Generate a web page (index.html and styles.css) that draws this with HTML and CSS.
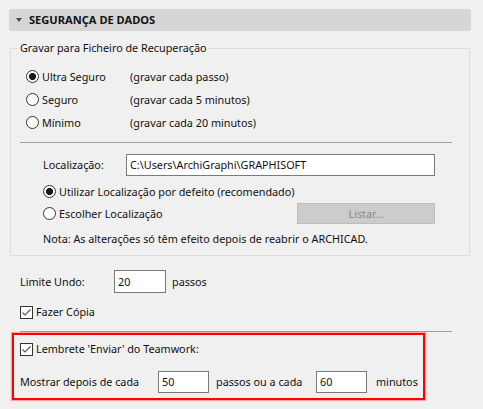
FILE: index.html
```html
<!DOCTYPE html>
<html lang="pt">
<head>
<meta charset="utf-8">
<title>Segurança de Dados</title>
<link rel="stylesheet" href="styles.css">
</head>
<body>
<div class="panel">
  <div class="header"><span class="tri"></span><span class="title">SEGURANÇA DE DADOS</span></div>

  <fieldset class="group">
    <legend>Gravar para Ficheiro de Recuperação</legend>
    <div class="group-body">
      <div class="mode"><span class="radio on"></span><span class="mode-name">Ultra Seguro</span><span>(gravar cada passo)</span></div>
      <div class="mode"><span class="radio"></span><span class="mode-name">Seguro</span><span>(gravar cada 5 minutos)</span></div>
      <div class="mode"><span class="radio"></span><span class="mode-name">Mínimo</span><span>(gravar cada 20 minutos)</span></div>
      <hr class="sep">
      <div class="loc">
        <div class="loc-row"><span class="loc-label">Localização:</span><div class="field path">C:\Users\ArchiGraphi\GRAPHISOFT</div></div>
        <div class="opt first"><span class="radio on"></span>Utilizar Localização por defeito (recomendado)</div>
        <div class="opt second"><span class="radio"></span>Escolher Localização<button class="btn">Listar...</button></div>
        <p class="note">Nota: As alterações só têm efeito depois de reabrir o ARCHICAD.</p>
      </div>
    </div>
  </fieldset>

  <div class="undo"><span class="undo-label">Limite Undo:</span><div class="field num">20</div><span class="unit">passos</span></div>

  <div class="copy"><svg class="check" width="13" height="13" viewBox="0 0 13 13"><rect x="0.5" y="0.5" width="12" height="12" fill="#fff" stroke="#333"/><path d="M2.5 6.5 L5 9 L10.5 3.5" fill="none" stroke="#5a5a5a" stroke-width="1.2"/></svg>Fazer Cópia</div>

  <hr class="sep2">

  <div class="teamwork">
    <div class="tw-row"><svg class="check" width="13" height="13" viewBox="0 0 13 13"><rect x="0.5" y="0.5" width="12" height="12" fill="#fff" stroke="#333"/><path d="M2.5 6.5 L5 9 L10.5 3.5" fill="none" stroke="#5a5a5a" stroke-width="1.2"/></svg>Lembrete 'Enviar' do Teamwork:</div>
    <div class="show-row"><span class="show-label">Mostrar depois de cada</span><div class="field num2">50</div><span class="mid">passos ou a cada</span><div class="field num2">60</div><span class="min">minutos</span></div>
  </div>
</div>
</body>
</html>
```
FILE: styles.css
```css
* { box-sizing: border-box; }
html, body { margin: 0; }
body {
  background: #f0f0f0;
  font-family: "Noto Sans", "Open Sans", sans-serif;
  font-size: 10.8px;
  line-height: 16px;
  color: #111;
  width: 483px;
  height: 409px;
  overflow: hidden;
}
.panel { padding: 9px 12px 0 9px; }
.header {
  height: 22px;
  background: #d6d6d6;
  border-radius: 3px;
  display: flex;
  align-items: center;
  padding-left: 7px;
}
.tri {
  width: 0; height: 0;
  border-left: 3px solid transparent;
  border-right: 3px solid transparent;
  border-top: 4px solid #4a4a4a;
  margin-right: 7px;
}
.title { font-weight: 700; font-size: 11.1px; }

.group {
  margin: 9px 1px 0;
  padding: 0;
  border: 1px solid #dcdcdc;
  min-width: 0;
}
.group legend { margin-left: 7px; padding: 0 2px; line-height: 16px; }
.group-body { padding: 9px 34px 8px 15px; }

.mode { display: flex; align-items: center; height: 23px; }
.mode-name { width: 88px; flex: none; }
.radio {
  flex: none;
  width: 13px; height: 13px;
  border: 1px solid #333;
  border-radius: 50%;
  background: #fff;
  margin-right: 3px;
}
.radio.on { background: radial-gradient(circle, #1a1a1a 3.2px, #fff 3.9px); }

.sep {
  border: 0;
  border-top: 1px solid #a0a0a0;
  height: 0;
  margin: 8px -17px 0 -6px;
}
.loc { margin-left: 17px; }
.loc-row { display: flex; align-items: center; margin-top: 11px; }
.loc-label { width: 83px; flex: none; }
.field {
  flex: none;
  height: 22px;
  border: 1px solid #7a7a7a;
  background: #fff;
  padding-left: 3px;
  display: flex;
  align-items: center;
}
.path { flex: 1; }
.opt { display: flex; align-items: center; height: 21px; }
.opt.first { margin-top: 5px; }
.opt.second { margin-top: 1px; }
.btn {
  flex: none;
  margin-left: auto;
  width: 138px; height: 21px;
  background: #cccccc;
  border: 1px solid #bdbdbd;
  color: #8a8a8a;
  font: inherit;
  padding: 0;
}
.note { margin: 7px 0 0; }

.undo { display: flex; align-items: center; margin-top: 14px; padding-left: 11px; }
.undo-label { width: 94px; flex: none; }
.num { width: 52px; height: 23px; }
.unit { margin-left: 6px; }

.copy { display: flex; align-items: center; height: 20px; margin-top: 9px; padding-left: 11px; }
.check { flex: none; margin-right: 3px; }

.sep2 {
  border: 0;
  border-top: 1px solid #a0a0a0;
  height: 0;
  margin: 9px 19px 0 11px;
}

.teamwork {
  margin: 1px 46px 0 3px;
  border: 2px solid #ff0000;
  box-shadow: 0 0 1px 1px rgba(255, 0, 0, 0.3);
  padding: 4px 0 5px 6px;
}
.tw-row { display: flex; align-items: center; height: 20px; }
.show-row { display: flex; align-items: center; height: 22px; margin-top: 12px; }
.show-label { width: 138px; flex: none; }
.num2 { width: 51px; height: 22px; }
.mid { margin-left: 7px; width: 100px; flex: none; }
.min { margin-left: 9px; flex: none; }
```
